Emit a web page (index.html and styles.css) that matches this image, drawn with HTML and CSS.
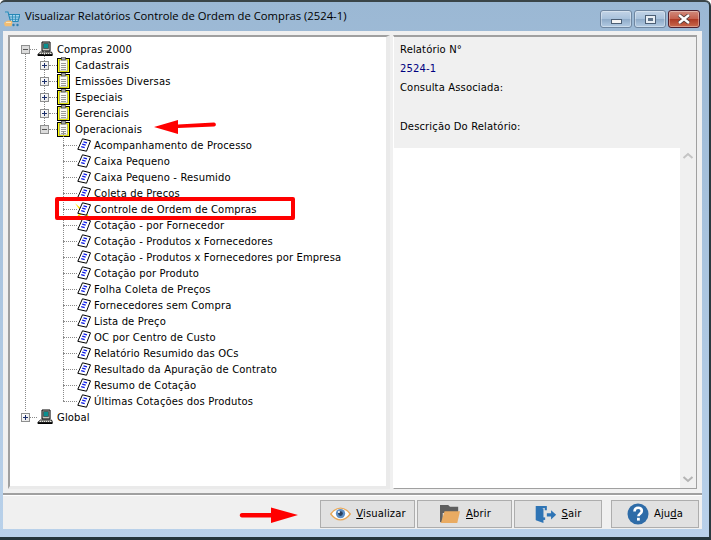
FILE: index.html
```html
<!DOCTYPE html>
<html lang="pt-BR">
<head>
<meta charset="utf-8">
<title>Visualizar Relatórios</title>
<link rel="stylesheet" href="styles.css">
</head>
<body>
<svg class="defs" width="0" height="0" aria-hidden="true">
  <symbol id="i-pc" viewBox="0 0 16 16">
    <path d="M5 1h8v9H5z" fill="#c8c8c0" stroke="#000"/>
    <path d="M6.500 2.500h5v5h-5z" fill="#0a8f8f" stroke="#333" stroke-width=".6"/>
    <path d="M12.500 1.500h1.500v8h-1.500z" fill="#777"/>
    <path d="M3.500 11h11l1 2.500H.7z" fill="#e8e8e0" stroke="#000" stroke-width=".9"/>
    <path d="M.7 14.500h14.800" stroke="#000"/>
    <path d="M4 12.300h9" stroke="#555" stroke-dasharray="1 1"/>
  </symbol>
  <symbol id="i-clip" viewBox="0 0 13 16">
    <rect x="0" y="1" width="13" height="15" fill="#000"/>
    <rect x="1" y="2" width="11" height="13" fill="#ffff00"/>
    <rect x="2.500" y="3" width="8" height="11" fill="#fbfbf4" stroke="#6a6a6a" stroke-width=".5"/>
    <path d="M4 6.500h5M4 8.500h5M4 10.500h5M4 12.500h5" stroke="#9a9a9a" stroke-width="1"/>
    <rect x="4.500" y="0" width="4" height="3" fill="#a8a8a8" stroke="#333" stroke-width=".6"/>
  </symbol>
  <symbol id="i-doc" viewBox="0 0 14 14">
    <path d="M5.500 .8l8 2-4 10.400L.8 11.300z" fill="#fff" stroke="#000" stroke-width="1"/>
    <path d="M6.500 3.800l3.500 1M5.200 6.200l3.500 1M4.200 8.600l3.500 1" stroke="#0a18e8" stroke-width="1.200"/>
  </symbol>
  <symbol id="i-cart" viewBox="0 0 16 16">
    <path d="M1 1h3l2.500 9.500h7.500l2-7H5" fill="#a6d6ee" stroke="#2687b5" stroke-width="1.100"/>
    <path d="M5.500 6h10M6 8.300h9M8.500 3.500v7M11.500 3.500v7" stroke="#2687b5" stroke-width=".8"/>
    <path d="M0 12.500c2-3.500 6-3.500 8.500-2l-1 4.800H1z" fill="#f2bd73"/>
    <path d="M2 11.500h5" stroke="#fbe3b8"/>
    <circle cx="9.500" cy="14" r="1.200" fill="#2f7fae"/>
    <circle cx="13.500" cy="14" r="1.200" fill="#2f7fae"/>
  </symbol>
</svg>

<div class="window">
  <header class="titlebar">
    <svg class="app-icon"><use href="#i-cart"/></svg>
    <span class="title">Visualizar Relatórios Controle de Ordem de Compras (2524-1)</span>
    <div class="caption">
      <span class="cap cap-min"><i></i></span>
      <span class="cap cap-max"><i></i></span>
      <span class="cap cap-close">
        <svg width="16" height="10" viewBox="0 0 16 10"><path d="M3 1l10 8M13 1L3 9" stroke="#4a3a3a" stroke-width="4"/><path d="M3 1l10 8M13 1L3 9" stroke="#fff" stroke-width="2.400"/></svg>
      </span>
    </div>
  </header>

  <div class="client">
    <main class="panes">
      <section class="tree-pane">
        <ul class="tree root">
          <li class="node">
            <div class="row"><span class="exp minus"></span><span class="dash d1"></span><svg class="ic-pc"><use href="#i-pc"/></svg><span class="label l-pc">Compras 2000</span></div>
            <ul class="tree lvl2">
              <li class="node"><div class="row"><span class="exp plus"></span><span class="dash d2"></span><svg class="ic-clip"><use href="#i-clip"/></svg><span class="label l-clip">Cadastrais</span></div></li>
              <li class="node"><div class="row"><span class="exp plus"></span><span class="dash d2"></span><svg class="ic-clip"><use href="#i-clip"/></svg><span class="label l-clip">Emissões Diversas</span></div></li>
              <li class="node"><div class="row"><span class="exp plus"></span><span class="dash d2"></span><svg class="ic-clip"><use href="#i-clip"/></svg><span class="label l-clip">Especiais</span></div></li>
              <li class="node"><div class="row"><span class="exp plus"></span><span class="dash d2"></span><svg class="ic-clip"><use href="#i-clip"/></svg><span class="label l-clip">Gerenciais</span></div></li>
              <li class="node">
                <div class="row"><span class="exp minus"></span><span class="dash d2"></span><svg class="ic-clip"><use href="#i-clip"/></svg><span class="label l-clip">Operacionais</span></div>
                <ul class="tree lvl3">
                  <li class="row leaf"><span class="dash d3"></span><svg class="ic-doc"><use href="#i-doc"/></svg><span class="label l-doc">Acompanhamento de Processo</span></li>
                  <li class="row leaf"><span class="dash d3"></span><svg class="ic-doc"><use href="#i-doc"/></svg><span class="label l-doc">Caixa Pequeno</span></li>
                  <li class="row leaf"><span class="dash d3"></span><svg class="ic-doc"><use href="#i-doc"/></svg><span class="label l-doc">Caixa Pequeno - Resumido</span></li>
                  <li class="row leaf"><span class="dash d3"></span><svg class="ic-doc"><use href="#i-doc"/></svg><span class="label l-doc">Coleta de Preços</span></li>
                  <li class="row leaf"><span class="dash d3"></span><span class="doc-wrap"><svg class="star" viewBox="0 0 14 14"><path d="M0 1l7 6 7-6-5 7 4 6-6-4-6 4 4-6z" fill="#ffe000"/></svg><svg class="ic-doc"><use href="#i-doc"/></svg></span><span class="label l-doc">Controle de Ordem de Compras</span></li>
                  <li class="row leaf"><span class="dash d3"></span><svg class="ic-doc"><use href="#i-doc"/></svg><span class="label l-doc">Cotação - por Fornecedor</span></li>
                  <li class="row leaf"><span class="dash d3"></span><svg class="ic-doc"><use href="#i-doc"/></svg><span class="label l-doc">Cotação - Produtos x Fornecedores</span></li>
                  <li class="row leaf"><span class="dash d3"></span><svg class="ic-doc"><use href="#i-doc"/></svg><span class="label l-doc">Cotação - Produtos x Fornecedores por Empresa</span></li>
                  <li class="row leaf"><span class="dash d3"></span><svg class="ic-doc"><use href="#i-doc"/></svg><span class="label l-doc">Cotação por Produto</span></li>
                  <li class="row leaf"><span class="dash d3"></span><svg class="ic-doc"><use href="#i-doc"/></svg><span class="label l-doc">Folha Coleta de Preços</span></li>
                  <li class="row leaf"><span class="dash d3"></span><svg class="ic-doc"><use href="#i-doc"/></svg><span class="label l-doc">Fornecedores sem Compra</span></li>
                  <li class="row leaf"><span class="dash d3"></span><svg class="ic-doc"><use href="#i-doc"/></svg><span class="label l-doc">Lista de Preço</span></li>
                  <li class="row leaf"><span class="dash d3"></span><svg class="ic-doc"><use href="#i-doc"/></svg><span class="label l-doc">OC por Centro de Custo</span></li>
                  <li class="row leaf"><span class="dash d3"></span><svg class="ic-doc"><use href="#i-doc"/></svg><span class="label l-doc">Relatório Resumido das OCs</span></li>
                  <li class="row leaf"><span class="dash d3"></span><svg class="ic-doc"><use href="#i-doc"/></svg><span class="label l-doc">Resultado da Apuração de Contrato</span></li>
                  <li class="row leaf"><span class="dash d3"></span><svg class="ic-doc"><use href="#i-doc"/></svg><span class="label l-doc">Resumo de Cotação</span></li>
                  <li class="row leaf"><span class="dash d3"></span><svg class="ic-doc"><use href="#i-doc"/></svg><span class="label l-doc">Últimas Cotações dos Produtos</span></li>
                </ul>
              </li>
            </ul>
          </li>
          <li class="node">
            <div class="row"><span class="exp plus"></span><span class="dash d1"></span><svg class="ic-pc"><use href="#i-pc"/></svg><span class="label l-pc">Global</span></div>
          </li>
        </ul>
      </section>
      <aside class="info-pane">
        <div class="info">
          <p>Relatório N°</p>
          <p class="num">2524-1</p>
          <p>Consulta Associada:</p>
          <p class="blank">&nbsp;</p>
          <p>Descrição Do Relatório:</p>
        </div>
        <div class="desc">
          <div class="desc-text"></div>
          <div class="scrollbar">
            <svg width="12" height="8" viewBox="0 0 12 8"><path d="M1.500 6L6 2l4.500 4" fill="none" stroke="#c4c4c4" stroke-width="2"/></svg>
            <svg width="12" height="8" viewBox="0 0 12 8"><path d="M1.500 2L6 6l4.500-4" fill="none" stroke="#b4b4b4" stroke-width="2"/></svg>
          </div>
        </div>
      </aside>
    </main>

    <footer class="actions">
      <button class="btn btn-wide"><svg width="23" height="14" viewBox="0 0 28 18"><path d="M1.500 9C6 3 10 1.500 14 1.500S22 3 26.500 9C22 15 18 16.500 14 16.500S6 15 1.500 9z" fill="#fff" stroke="#e9a95a" stroke-width="1.800"/><circle cx="14" cy="8.500" r="6" fill="#5f8fc4"/><circle cx="14" cy="8.500" r="3" fill="#2a3f5c"/><circle cx="12" cy="6.500" r="1.300" fill="#fff"/></svg><span><u>V</u>isualizar</span></button>
      <button class="btn btn-wide"><svg width="24" height="20" viewBox="0 0 24 22"><path d="M1 1h9l2 2h9v7H1z" fill="#5f5f5f"/><path d="M1 3v17l3 0V3z" fill="#5f5f5f"/><path d="M6 8h17l-3 13H2z" fill="#e9ab62"/></svg><span><u>A</u>brir</span></button>
      <button class="btn btn-narrow"><svg width="22" height="22" viewBox="0 0 26 22"><path d="M1 1.500h13v5h-2.500V4H8v14H1z" fill="#2e74b5"/><path d="M1 1.500l9 3V21.500l-9-3z" fill="#2e74b5"/><path d="M14 10h5V6.500l6 5.500-6 5.500V14h-5z" fill="#2e74b5"/><path d="M12 15v3H9v-3z" fill="#2e74b5"/></svg><span><u>S</u>air</span></button>
      <button class="btn btn-narrow btn-help"><svg width="22" height="22" viewBox="0 0 22 22"><circle cx="11" cy="11" r="10.500" fill="#2e6ca8"/><path d="M7.500 8.500c0-2.300 1.600-3.700 3.700-3.700s3.600 1.300 3.600 3.200c0 2.700-3.400 2.700-3.400 5.300" fill="none" stroke="#fff" stroke-width="2.600"/><rect x="10" y="14.800" width="2.800" height="2.800" fill="#fff"/></svg><span>Aj<span>u</span><u>d</u>a</span></button>
    </footer>
  </div>

  <div class="mark-box"></div>
  <svg class="mark arrow-top" width="64" height="16" viewBox="0 0 64 16"><path d="M0 8L24 1l0 4.500 36-2c2 0 3 3.500 0 4l-36 1.500 0 6z" fill="#f00"/></svg>
  <svg class="mark arrow-bottom" width="60" height="16" viewBox="0 0 60 16"><path d="M59 8L32 .5V6H3c-3 0-3 4.500 0 4.500h29V16z" fill="#f00"/></svg>
</div>
</body>
</html>
```
FILE: styles.css
```css
* { box-sizing: border-box; }
html, body { margin: 0; padding: 0; }
body { width: 711px; height: 540px; overflow: hidden; background: #fff; font-family: "DejaVu Sans", sans-serif; font-size: 10px; letter-spacing: .14px; color: #000; }
.defs { position: absolute; }
ul { list-style: none; margin: 0; padding: 0; }
p { margin: 0; }

.window { position: relative; width: 711px; height: 540px; display: flex; flex-direction: column; background: linear-gradient(180deg, #9bb8d4 0, #b9d1ea 100%); border-top: 2px solid #3a4548; border-right: 2px solid #2b3a40; border-bottom: 3px solid #25363c; border-radius: 5px 6px 0 0; padding: 0 7px 8px 3px; }

.titlebar { height: 29px; flex: none; display: flex; align-items: center; position: relative; }
.app-icon { width: 16px; height: 16px; margin: 4px 5px 0 1px; flex: none; }
.title { font-family: "Open Sans", sans-serif; font-size: 11.26px; letter-spacing: 0; color: #000; flex: 1; white-space: nowrap; position: relative; top: -1px; }
.caption { display: flex; gap: 2px; align-self: flex-start; margin-top: 8px; margin-right: 2px; }
.cap { width: 32px; height: 18px; border: 1px solid #6f86a0; border-radius: 3px; display: flex; align-items: center; justify-content: center; background: linear-gradient(180deg, #c3d4e6 0, #a9c2dc 48%, #8fabc8 52%, #b3cbe3 100%); box-shadow: inset 0 0 0 1px rgba(255,255,255,.35); }
.cap i { display: block; }
.cap-min i { width: 11px; height: 5px; margin-top: 5px; background: #f4f4f4; border: 1px solid #4c5f75; }
.cap-max i { width: 11px; height: 9px; background: #e8eef4; border: 1px solid #4c5f75; position: relative; background-image: linear-gradient(#5e7288,#5e7288); background-size: 5px 3px; background-position: center; background-repeat: no-repeat; }
.cap-close { background: linear-gradient(180deg, #d08a7c 0, #c5614f 48%, #ad3a25 52%, #c96a4e 100%); border-color: #4e2030; }

.client { flex: 1; min-height: 0; background: #f0f0f0; display: flex; flex-direction: column; }
.panes { flex: 1; min-height: 0; display: flex; padding: 4px 3px 4px 5px; border-bottom: 2px solid #a0a0a0; height: 464px; }
.tree-pane { width: 382px; flex: none; background: #fff; border-top: 2px solid #a0a0a0; border-left: 2px solid #a0a0a0; border-right: 4px solid #eaeaea; border-bottom: 3px solid #eaeaea; padding-top: 4px; overflow: hidden; }

.row { display: flex; align-items: center; height: 16px; white-space: nowrap; }
.node { position: relative; }
.label { display: block; color: #000; }
.exp { width: 9px; height: 9px; flex: none; margin-left: 11px; border: 1px solid #8e8f8f; background: linear-gradient(135deg, #fff 0, #e6e6e6 100%); position: relative; z-index: 1; }
.exp.minus { background: #dcdcdc; }
.exp::before { content: ""; position: absolute; left: 1px; top: 3px; width: 5px; height: 1px; background: #1c2f6b; }
.exp.plus::after { content: ""; position: absolute; left: 3px; top: 1px; width: 1px; height: 5px; background: #1c2f6b; }
.exp.minus::before { background: #555; }
.dash { display: block; flex: none; height: 0; border-top: 1px dotted #8a8a8a; }
.d1 { width: 7px; }
.d2 { width: 8px; }
.d3 { width: 14px; margin-left: 53px; }
.ic-pc { width: 16px; height: 16px; flex: none; }
.ic-clip { width: 13px; height: 16px; flex: none; }
.ic-doc { width: 14px; height: 14px; flex: none; display: block; }
.l-pc { margin-left: 4px; }
.l-clip { margin-left: 5px; }
.l-doc { margin-left: 3px; }
.doc-wrap { position: relative; width: 14px; height: 14px; flex: none; }
.star { position: absolute; left: -2px; top: 0; width: 16px; height: 16px; }
.doc-wrap .ic-doc { position: relative; }

.lvl2 { position: relative; }
.lvl2 > .node > .row { padding-left: 19px; }
.lvl3 { position: relative; }
.root > .node::before, .lvl2::before, .lvl3::before { content: ""; position: absolute; border-left: 1px dotted #8a8a8a; }
.root > .node:first-child::before { left: 15px; top: 12px; height: 358px; }
.root > .node:last-child::before { display: none; }
.lvl2::before { left: 34px; top: -6px; height: 78px; }
.lvl3::before { left: 53px; top: -6px; height: 270px; }

.info-pane { width: 304px; margin-left: 3px; flex: none; display: flex; flex-direction: column; border-top: 2px solid #a0a0a0; border-left: 1px solid #fff; border-right: 1px solid #a0a0a0; border-bottom: 1px solid #a0a0a0; background: #f0f0f0; }
.info { height: 111px; flex: none; padding: 3px 0 0 6px; display: flex; flex-direction: column; }
.info p { height: 19px; line-height: 19px; }
.info .num { color: #000080; }
.info .blank { height: 20px; }
.desc { flex: 1; min-height: 0; background: #fff; display: flex; justify-content: flex-end; }
.scrollbar { width: 16px; background: #f0f0f0; display: flex; flex-direction: column; justify-content: space-between; align-items: center; padding: 4px 0 5px; }

.actions { height: 34px; flex: none; display: flex; align-items: center; justify-content: flex-end; padding: 2px 3px 0 0; gap: 2px; border-top: 1px solid #fff; }
.btn { height: 28px; display: flex; align-items: center; justify-content: center; gap: 4px; padding: 0; background: #e1e1e1; border: 1px solid #adadad; font: inherit; letter-spacing: inherit; color: #000; }
.btn-wide { width: 95px; }
.btn-narrow { width: 88px; gap: 5px; }
.btn-help { margin-left: 7px; }

.mark { position: absolute; }
.mark-box { position: absolute; left: 55px; top: 195px; width: 240px; height: 23px; border: 4px solid #f00; border-radius: 2px; }
.arrow-top { left: 154px; top: 117px; }
.arrow-bottom { left: 239px; top: 505px; }
```
